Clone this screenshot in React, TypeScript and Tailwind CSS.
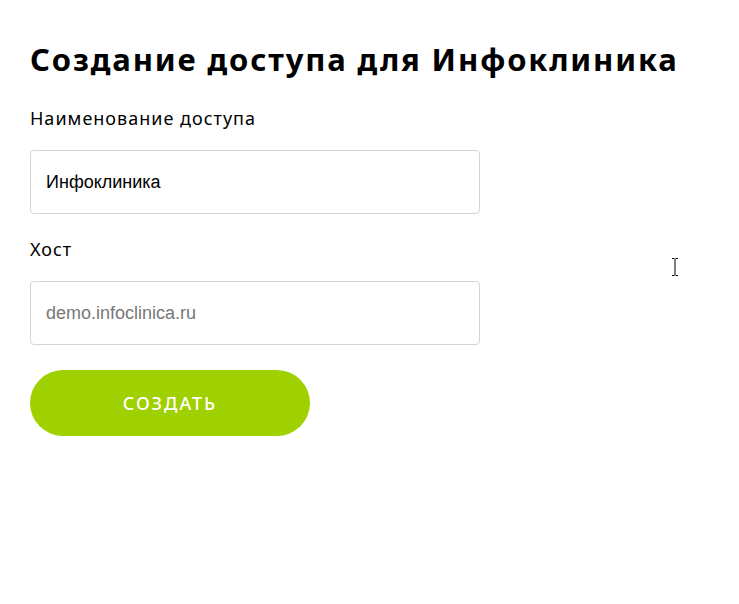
import React from "react";

export default function App() {
  return (
    <div className="relative min-h-[604px] w-full bg-white px-[30px] pt-[38px]" style={{ fontFamily: '"Noto Sans", "Open Sans", sans-serif' }}>
      <h1 className="text-[31px] font-bold leading-[42px] text-black tracking-[1.85px]">
        Создание доступа для Инфоклиника
      </h1>
      <div className="mt-[26px] flex w-[450px] flex-col">
        <label className="text-[18px] leading-[24px] text-black tracking-[1px]">Наименование доступа</label>
        <input
          className="mt-[20px] h-[64px] w-[450px] rounded-[4px] border border-[#d4d4d4] px-[15px] text-[18px] text-black outline-none"
          style={{ fontFamily: '"Liberation Sans", Arial, sans-serif' }}
          defaultValue="Инфоклиника"
        />
        <label className="mt-[23px] text-[18px] leading-[24px] text-black tracking-[1px]">Хост</label>
        <input
          className="mt-[20px] h-[64px] w-[450px] rounded-[4px] border border-[#d4d4d4] px-[15px] text-[18px] text-black outline-none placeholder:text-[#777777]"
          style={{ fontFamily: '"Liberation Sans", Arial, sans-serif' }}
          placeholder="demo.infoclinica.ru"
        />
        <button className="mt-[25px] h-[66px] w-[280px] rounded-full bg-[#9fd000] text-[18px] font-medium tracking-[2px] text-white">
          СОЗДАТЬ
        </button>
      </div>
      <svg className="absolute left-[670px] top-[257px]" width="10" height="20" viewBox="0 0 10 20">
        <path d="M2 1.5h2.5M5.5 1.5H8M5 2v16M2 18.5h2.5M5.5 18.5H8" stroke="#fff" strokeWidth="3" fill="none" />
        <path d="M2 1.5h2.5M5.5 1.5H8M5 2v16M2 18.5h2.5M5.5 18.5H8" stroke="#000" strokeWidth="1" fill="none" />
      </svg>
    </div>
  );
}
